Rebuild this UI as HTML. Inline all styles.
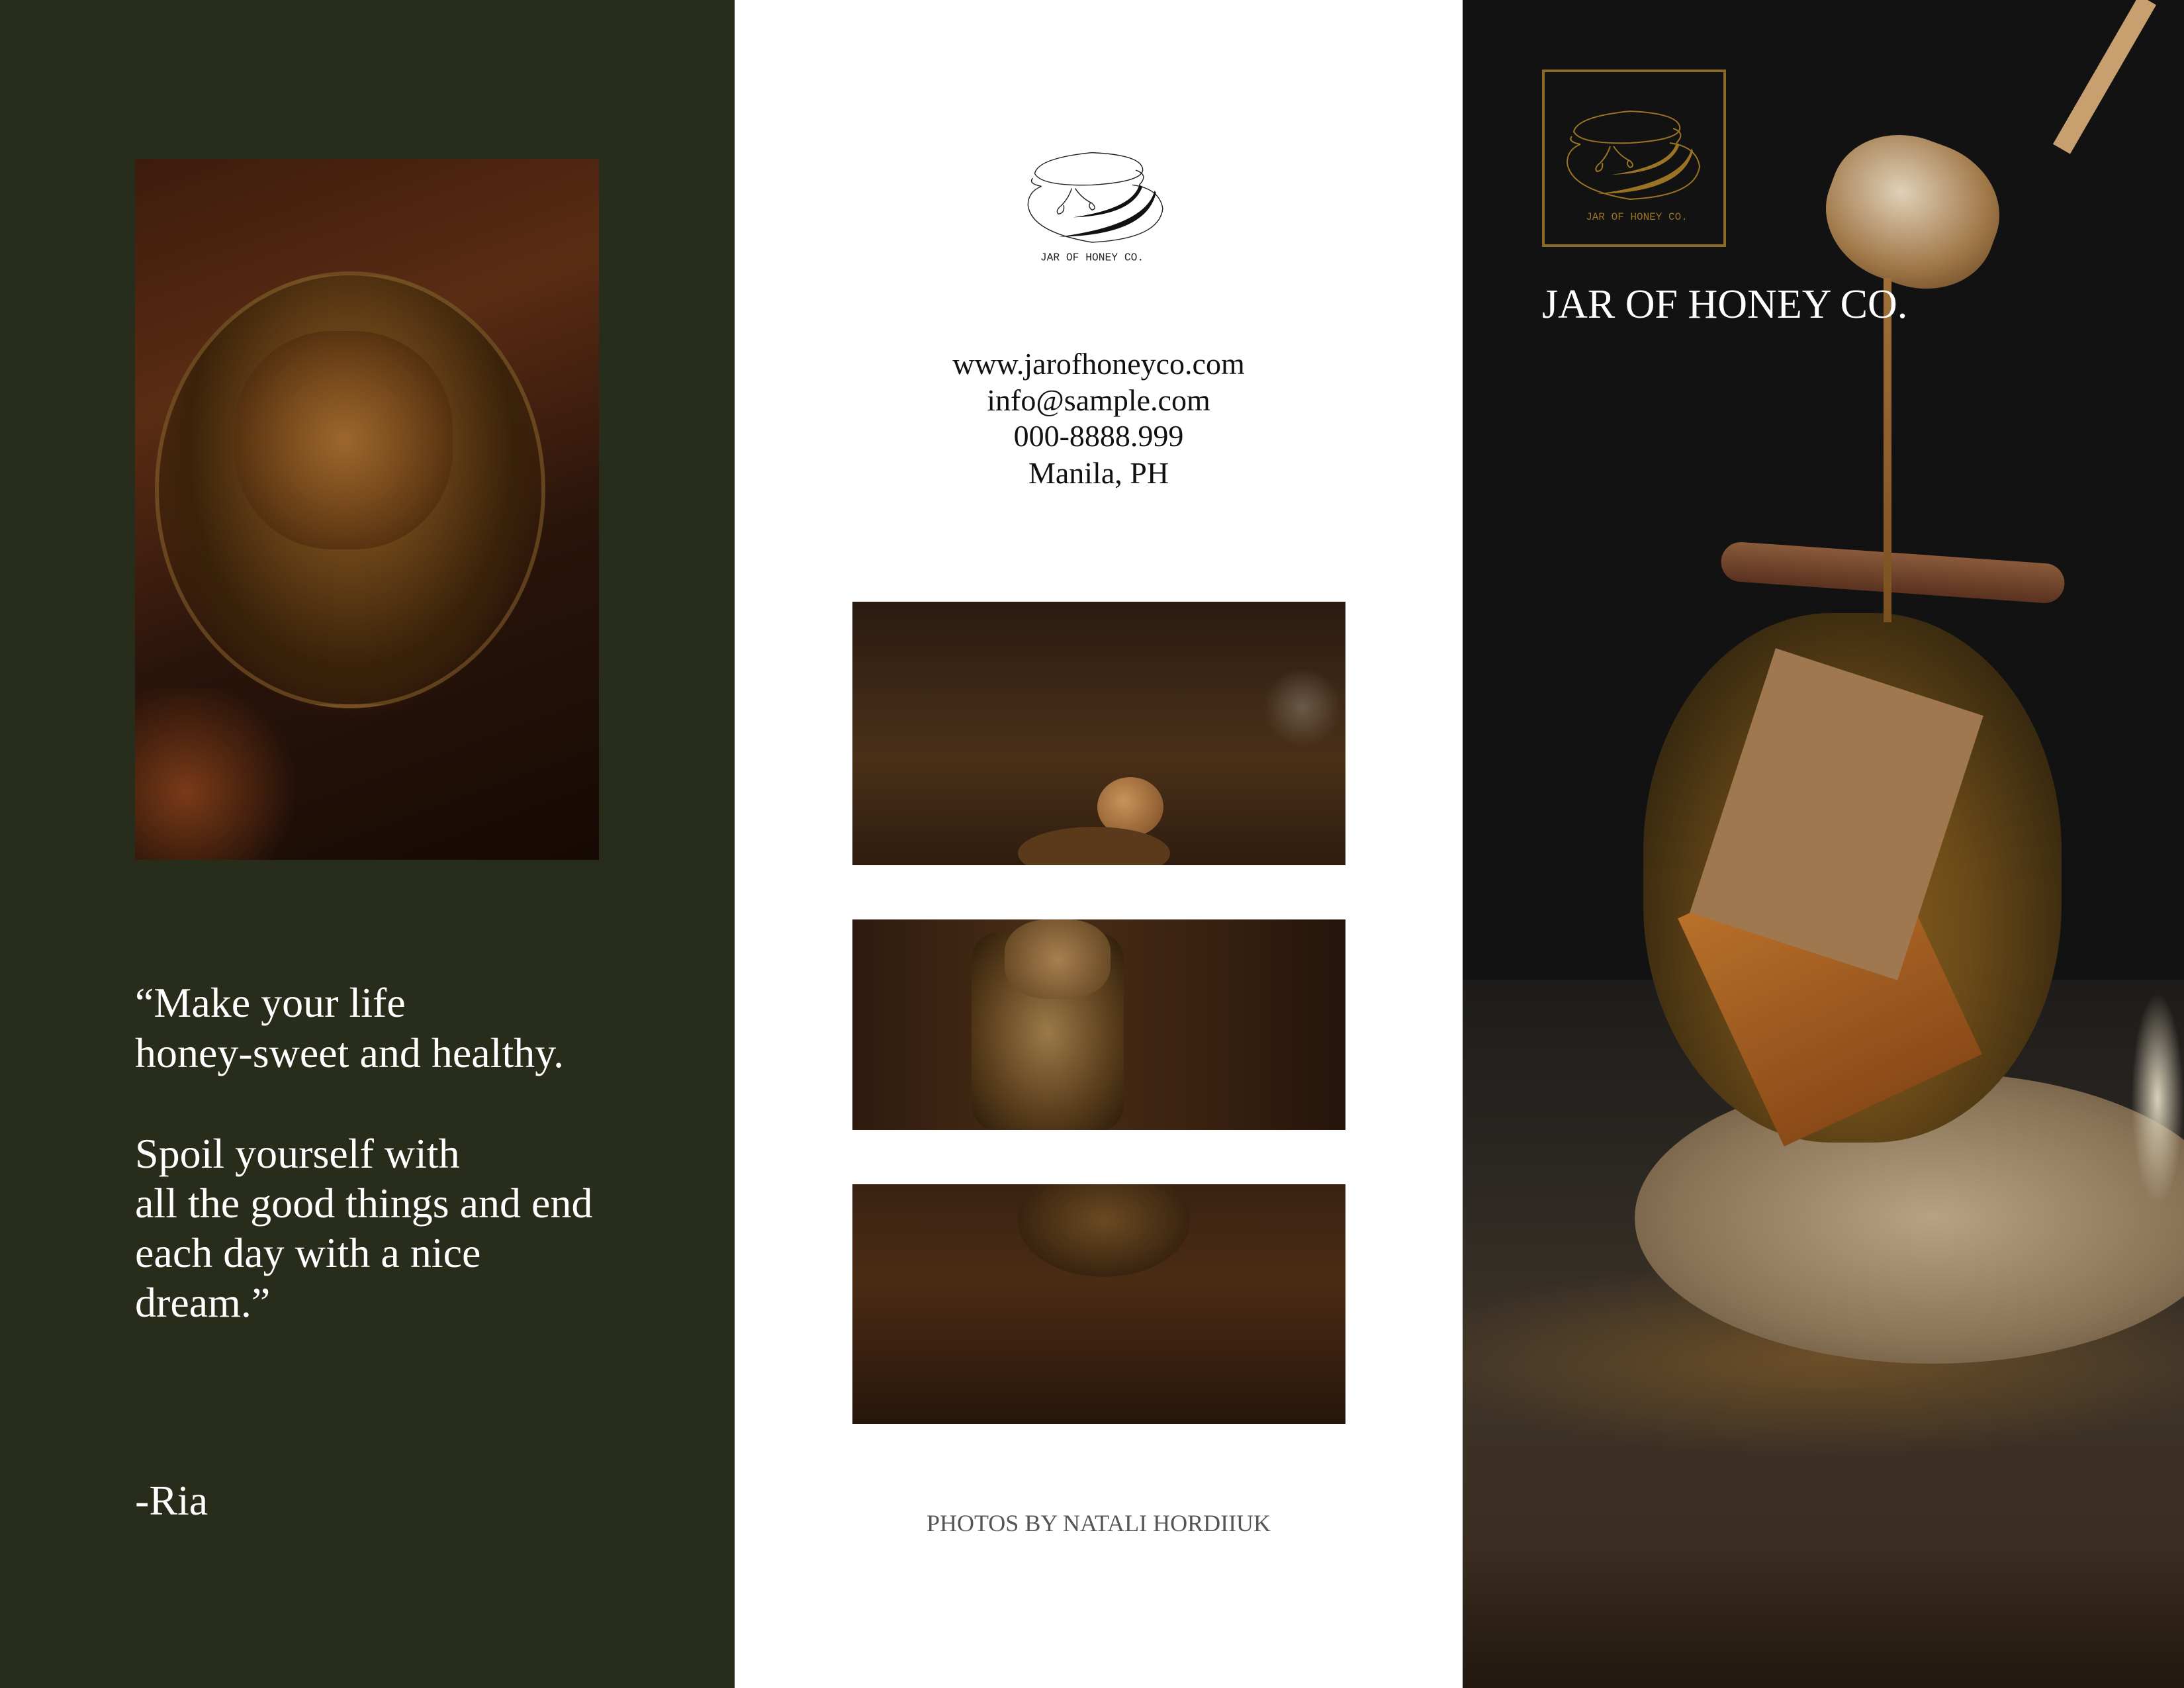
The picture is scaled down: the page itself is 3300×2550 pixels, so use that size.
<!DOCTYPE html>
<html><head><meta charset="utf-8"><style>
*{margin:0;padding:0;box-sizing:border-box}
body{width:3300px;height:2550px;position:relative;overflow:hidden;font-family:"Liberation Serif",serif;background:#fff}
.a{position:absolute}
.left{left:0;top:0;width:1110px;height:2550px;background:#282c1a}
.q{position:absolute;left:204px;color:#fff;font-size:64px;line-height:76px;white-space:nowrap}
.mid{left:1110px;top:0;width:1100px;height:2550px;background:#fff}
.right{left:2210px;top:0;width:1090px;height:2550px;background:#121212;overflow:hidden}
.c{position:absolute;left:0;width:1100px;text-align:center;color:#111;font-size:46px;white-space:nowrap}
</style></head><body>

<div class="a left">
  <div class="a" style="left:204px;top:240px;width:701px;height:1059px;overflow:hidden;background:radial-gradient(ellipse 330px 380px at 330px 560px,#6e4a1c 0%,#4a2a0e 45%,transparent 75%),linear-gradient(160deg,#3c1c0c 0%,#5a2c14 30%,#2a140a 60%,#160a04 100%)">
    <div class="a" style="left:30px;top:170px;width:590px;height:660px;border-radius:50%;background:radial-gradient(ellipse at 50% 40%,#8a5a26 0%,#6a4418 30%,#3a220a 60%,#20120600 80%);border:6px solid rgba(190,140,70,.35)"></div>
    <div class="a" style="left:150px;top:260px;width:330px;height:330px;border-radius:45%;background:radial-gradient(circle at 50% 50%,#a06a30 0%,#7a4a1c 40%,#4a2a0c 80%);opacity:.85"></div>
    <div class="a" style="left:0;top:800px;width:260px;height:260px;background:radial-gradient(circle at 30% 60%,#7a3a18,transparent 70%)"></div>
  </div>
  <div class="q" style="top:1477px">“Make your life</div>
  <div class="q" style="top:1553px">honey-sweet and healthy.</div>
  <div class="q" style="top:1705px">Spoil yourself with</div>
  <div class="q" style="top:1780px">all the good things and end</div>
  <div class="q" style="top:1855px">each day with a nice</div>
  <div class="q" style="top:1930px">dream.”</div>
  <div class="q" style="top:2229px">-Ria</div>
</div>

<div class="a mid">
  <svg class="a" style="left:387px;top:198px" width="306" height="224" viewBox="0 0 300 220">
    <g fill="none" stroke="#222" stroke-width="1.4">
      <path d="M65 63 Q70 40 150 32 Q220 35 225 55 Q230 75 150 80 Q75 82 65 63 Z"/>
      <path d="M62 70 Q55 78 75 82 M215 58 Q235 65 220 80"/>
      <path d="M75 82 Q55 90 55 110 Q60 150 150 165 Q250 160 255 115 Q250 85 210 80"/>
      <path d="M120 85 Q115 100 105 110 Q95 118 100 123 Q110 122 108 110 M125 85 Q135 100 150 107 Q158 115 150 117 Q143 112 148 106"/>
    </g>
    <path d="M220 80 Q210 115 122 128 Q210 125 225 82 Z" fill="#111"/>
    <path d="M243 88 Q230 140 100 157 Q230 155 245 92 Z" fill="#111"/>
    <text x="150" y="192" text-anchor="middle" font-family="Liberation Mono,monospace" font-size="16" fill="#222">JAR OF HONEY CO.</text>
  </svg>
  <div class="c" style="top:523px">www.jarofhoneyco.com</div>
  <div class="c" style="top:578px">info@sample.com</div>
  <div class="c" style="top:632px">000-8888.999</div>
  <div class="c" style="top:688px">Manila, PH</div>
  <div class="a" style="left:178px;top:909px;width:745px;height:398px;overflow:hidden;background:linear-gradient(180deg,#2a1a10 0%,#3e2816 35%,#4a3018 60%,#2e1c0e 100%)">
    <div class="a" style="left:370px;top:265px;width:100px;height:90px;border-radius:50%;background:radial-gradient(circle at 40% 40%,#c8935a,#7a4a22)"></div>
    <div class="a" style="left:250px;top:340px;width:230px;height:80px;border-radius:50%;background:#5a3a1a"></div>
    <div class="a" style="left:620px;top:100px;width:120px;height:120px;border-radius:50%;background:radial-gradient(circle,#6a5a48,transparent 70%)"></div>
  </div>
  <div class="a" style="left:178px;top:1389px;width:745px;height:318px;overflow:hidden;background:linear-gradient(90deg,#2e1a0e,#4a2e16 40%,#3a2210 70%,#24140a)">
    <div class="a" style="left:180px;top:20px;width:230px;height:300px;border-radius:40px;background:radial-gradient(ellipse at 50% 50%,#9a7a48,#5a3e1c 60%,#2a1a0a)"></div>
    <div class="a" style="left:230px;top:0;width:160px;height:120px;border-radius:40%;background:radial-gradient(circle,#a88050,#5a3e1c)"></div>
  </div>
  <div class="a" style="left:178px;top:1789px;width:745px;height:362px;overflow:hidden;background:linear-gradient(180deg,#3a2212,#4a2c14 40%,#3a2010 70%,#26160a)">
    <div class="a" style="left:250px;top:-30px;width:260px;height:170px;border-radius:50%;background:radial-gradient(ellipse,#6a4a22,#3a2410 70%,transparent)"></div>
  </div>
  <div class="c" style="top:2280px;font-size:36px;color:#555">PHOTOS BY NATALI HORDIIUK</div>
</div>

<div class="a right">
  <div class="a" style="left:0;top:1480px;width:1090px;height:1070px;background:linear-gradient(180deg,#1e1c1a 0%,#2a2622 25%,#3e3428 55%,#3a2c20 80%,#22180f 100%)"></div>
  <div class="a" style="left:-100px;top:1900px;width:1300px;height:300px;background:radial-gradient(ellipse,rgba(180,120,40,.4),transparent 70%)"></div>
  <div class="a" style="left:260px;top:1620px;width:900px;height:440px;border-radius:50%;background:radial-gradient(ellipse,#b8a284 0%,#8a7458 60%,#5a4630 100%)"></div>
  <div class="a" style="left:273px;top:926px;width:632px;height:800px;border-radius:45%;background:radial-gradient(ellipse at 50% 60%,#8a6020 0%,#6a4a18 40%,#3a2a10 75%,#2a2010 100%)"></div>
  <div class="a" style="left:390px;top:1300px;width:330px;height:380px;transform:rotate(-25deg);background:linear-gradient(180deg,#b8702a,#8a4a18)"></div>
  <div class="a" style="left:400px;top:1020px;width:330px;height:420px;transform:rotate(18deg);background:#a07850"></div>
  <div class="a" style="left:390px;top:835px;width:520px;height:60px;border-radius:30px;transform:rotate(4deg);background:linear-gradient(180deg,#8a5a3a,#5a3220)"></div>
  <div class="a" style="left:1010px;top:1500px;width:80px;height:320px;background:radial-gradient(ellipse,#d8d0b8,transparent 70%)"></div>
  <div class="a" style="left:1020px;top:0;width:30px;height:260px;transform:rotate(30deg);transform-origin:top;background:#c8a070"></div>
  <div class="a" style="left:550px;top:210px;width:260px;height:220px;border-radius:45%;transform:rotate(20deg);background:radial-gradient(ellipse at 40% 40%,#e0d0b8,#a07848 60%,#5a3a1c)"></div>
  <div class="a" style="left:636px;top:420px;width:12px;height:520px;background:linear-gradient(180deg,#a07038,#7a5020)"></div>
  <div class="a" style="left:120px;top:105px;width:278px;height:268px;border:4px solid #8a6a22"></div>
  <svg class="a" style="left:103px;top:136px" width="300" height="220" viewBox="0 0 300 220">
    <g fill="none" stroke="#9a7424" stroke-width="2">
      <path d="M65 63 Q70 40 150 32 Q220 35 225 55 Q230 75 150 80 Q75 82 65 63 Z"/>
      <path d="M62 70 Q55 78 75 82 M215 58 Q235 65 220 80"/>
      <path d="M75 82 Q55 90 55 110 Q60 150 150 165 Q250 160 255 115 Q250 85 210 80"/>
      <path d="M120 85 Q115 100 105 110 Q95 118 100 123 Q110 122 108 110 M125 85 Q135 100 150 107 Q158 115 150 117 Q143 112 148 106"/>
    </g>
    <path d="M220 80 Q210 115 122 128 Q210 125 225 82 Z" fill="#9a7424"/>
    <path d="M243 88 Q230 140 100 157 Q230 155 245 92 Z" fill="#9a7424"/>
    <text x="160" y="196" text-anchor="middle" font-family="Liberation Mono,monospace" font-size="16" fill="#9a7424">JAR OF HONEY CO.</text>
  </svg>
  <div class="a" style="left:120px;top:425px;color:#fff;font-size:62px;white-space:nowrap">JAR OF HONEY CO.</div>
</div>
</body></html>
